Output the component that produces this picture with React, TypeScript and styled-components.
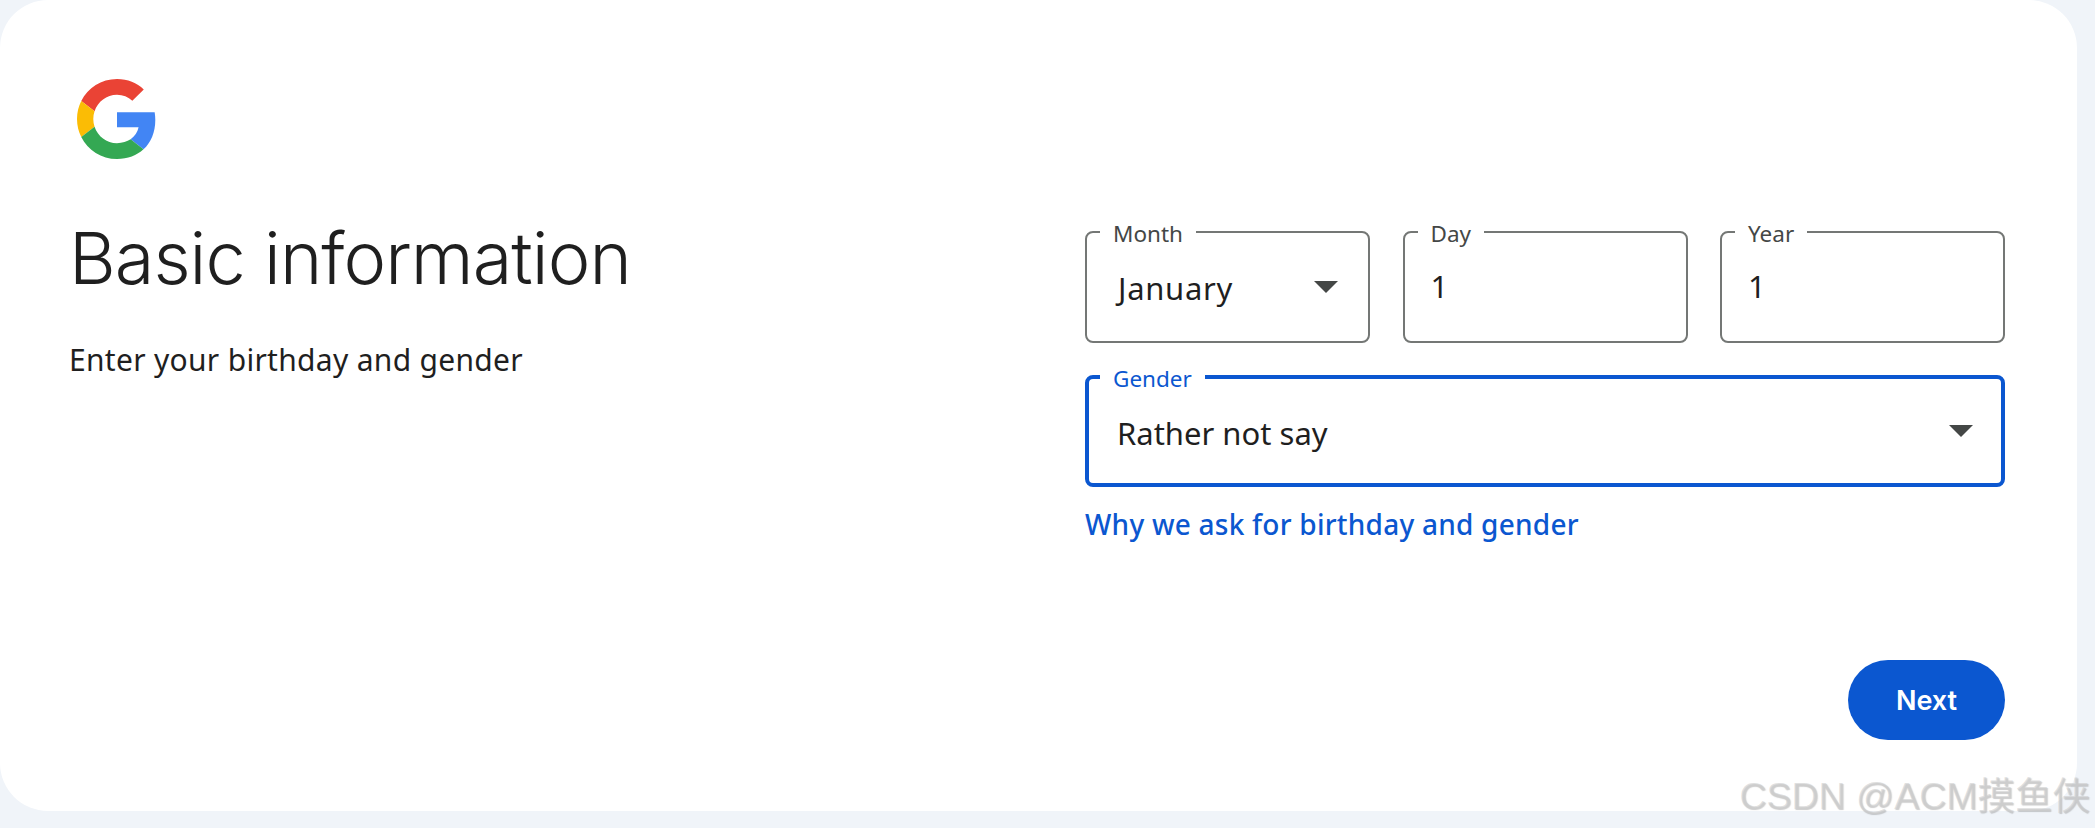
import React from "react";
import styled, { createGlobalStyle } from "styled-components";

const Global = createGlobalStyle`
  html, body { margin: 0; padding: 0; background: #f0f4f9; }
  body { font-family: Inter, "Noto Sans", sans-serif; color: #1f1f1f; }
`;

const Page = styled.div`
  position: relative;
  width: 2095px;
  height: 828px;
  overflow: hidden;
  background: #f0f4f9;
`;

const Card = styled.main`
  box-sizing: border-box;
  width: 2077px;
  height: 811px;
  padding: 79px 72px 0 77px;
  background: #fff;
  border-radius: 48px;
`;

const LogoWrap = styled.div`
  display: block;
  width: 80px;
  height: 80px;
`;

const Body = styled.div`
  display: grid;
  grid-template-columns: 1008px 920px;
`;

const Intro = styled.section`
  margin-left: -8px;
`;

const Title = styled.h1`
  margin: 55px 0 0;
  font-family: Inter, sans-serif;
  font-size: 72px;
  line-height: 88px;
  font-weight: 300;
  letter-spacing: -0.95px;
  color: #1f1f1f;
`;

const Subtitle = styled.p`
  margin: 38px 0 0;
  font-family: "Noto Sans", sans-serif;
  font-size: 30px;
  line-height: 40px;
  letter-spacing: 0.3px;
  color: #1f1f1f;
`;

const Form = styled.section`
  display: flex;
  flex-direction: column;
  margin-top: 72px;
`;

const DateRow = styled.div`
  display: grid;
  grid-template-columns: repeat(3, 285px);
  justify-content: space-between;
`;

const Field = styled.div<{ $focused?: boolean }>`
  position: relative;
  box-sizing: border-box;
  height: 112px;
  display: flex;
  align-items: center;
  justify-content: space-between;
  padding: 0 ${(p) => (p.$focused ? 28 : 30)}px;
  border: ${(p) => (p.$focused ? "4px solid #0b57d0" : "2px solid #747775")};
  border-radius: 8px;
  margin-top: ${(p) => (p.$focused ? "32px" : "0")};
`;

const FieldLabel = styled.span<{ $focused?: boolean }>`
  position: absolute;
  top: ${(p) => (p.$focused ? "-12px" : "-11px")};
  left: ${(p) => (p.$focused ? "11px" : "13px")};
  padding: 0 13px;
  background: #fff;
  height: 24px;
  font-family: "Noto Sans", sans-serif;
  font-size: 22.5px;
  line-height: 24px;
  color: ${(p) => (p.$focused ? "#0b57d0" : "#444746")};
`;

const Value = styled.span<{ $raise?: number }>`
  font-family: "Noto Sans", sans-serif;
  font-size: 31px;
  line-height: 40px;
  color: #1f1f1f;
  transform: translateY(${(p) => p.$raise ?? 0}px);
`;

const MonthValue = styled(Value)`
  margin-left: 1px;
  letter-spacing: 0.7px;
`;

const InputValue = styled(Value)`
  margin-left: -4px;
`;

const Arrow = styled.span`
  width: 0;
  height: 0;
  border-left: 12px solid transparent;
  border-right: 12px solid transparent;
  border-top: 12px solid #444746;
`;

const HelpLink = styled.a`
  display: block;
  margin-top: 17px;
  font-family: "Noto Sans", sans-serif;
  font-size: 28px;
  line-height: 40px;
  font-weight: 500;
  letter-spacing: 0.24px;
  color: #0b57d0;
  text-decoration: none;
`;

const Actions = styled.div`
  display: flex;
  justify-content: flex-end;
  margin-top: 116px;
`;

const NextButton = styled.button`
  width: 157px;
  height: 80px;
  border: 0;
  border-radius: 40px;
  background: #0b57d0;
  color: #fff;
  font-family: Inter, sans-serif;
  font-size: 27px;
  font-weight: 600;
`;

const Watermark = styled.div`
  position: absolute;
  right: 5px;
  bottom: 10px;
  font-family: "Liberation Sans", "Noto Sans CJK SC", sans-serif;
  font-size: 37.5px;
  line-height: 44px;
  white-space: nowrap;
  color: rgba(205, 205, 205, 0.6);
  text-shadow: 1px 1px 1px rgba(130, 130, 130, 0.4);
`;

const GoogleG = () => (
  <svg viewBox="0 0 48 48" width="80" height="80" aria-label="Google">
    <path fill="#EA4335" d="M24 9.5c3.54 0 6.71 1.22 9.21 3.6l6.85-6.85C35.9 2.38 30.47 0 24 0 14.62 0 6.51 5.38 2.56 13.22l7.98 6.19C12.43 13.72 17.74 9.5 24 9.5z" />
    <path fill="#4285F4" d="M46.98 24.55c0-1.57-.15-3.09-.38-4.55H24v9.02h12.94c-.58 2.96-2.26 5.48-4.78 7.18l7.73 6c4.51-4.18 7.09-10.36 7.09-17.65z" />
    <path fill="#FBBC05" d="M10.53 28.59c-.48-1.45-.76-2.99-.76-4.59s.27-3.14.76-4.59l-7.98-6.19C.92 16.46 0 20.12 0 24c0 3.88.92 7.54 2.56 10.78l7.97-6.19z" />
    <path fill="#34A853" d="M24 48c6.48 0 11.93-2.13 15.89-5.81l-7.73-6c-2.15 1.45-4.92 2.3-8.16 2.3-6.26 0-11.57-4.22-13.47-9.91l-7.98 6.19C6.51 42.62 14.62 48 24 48z" />
  </svg>
);

export default function App() {
  return (
    <Page>
      <Global />
      <Card>
        <LogoWrap>
          <GoogleG />
        </LogoWrap>
        <Body>
          <Intro>
            <Title>Basic information</Title>
            <Subtitle>Enter your birthday and gender</Subtitle>
          </Intro>
          <Form>
            <DateRow>
              <Field>
                <FieldLabel>Month</FieldLabel>
                <MonthValue $raise={1}>January</MonthValue>
                <Arrow />
              </Field>
              <Field>
                <FieldLabel>Day</FieldLabel>
                <InputValue $raise={-1}>1</InputValue>
              </Field>
              <Field>
                <FieldLabel>Year</FieldLabel>
                <InputValue $raise={-1}>1</InputValue>
              </Field>
            </DateRow>
            <Field $focused>
              <FieldLabel $focused>Gender</FieldLabel>
              <Value $raise={2}>Rather not say</Value>
              <Arrow />
            </Field>
            <HelpLink href="#">Why we ask for birthday and gender</HelpLink>
            <Actions>
              <NextButton>Next</NextButton>
            </Actions>
          </Form>
        </Body>
      </Card>
      <Watermark>CSDN @ACM摸鱼侠</Watermark>
    </Page>
  );
}
